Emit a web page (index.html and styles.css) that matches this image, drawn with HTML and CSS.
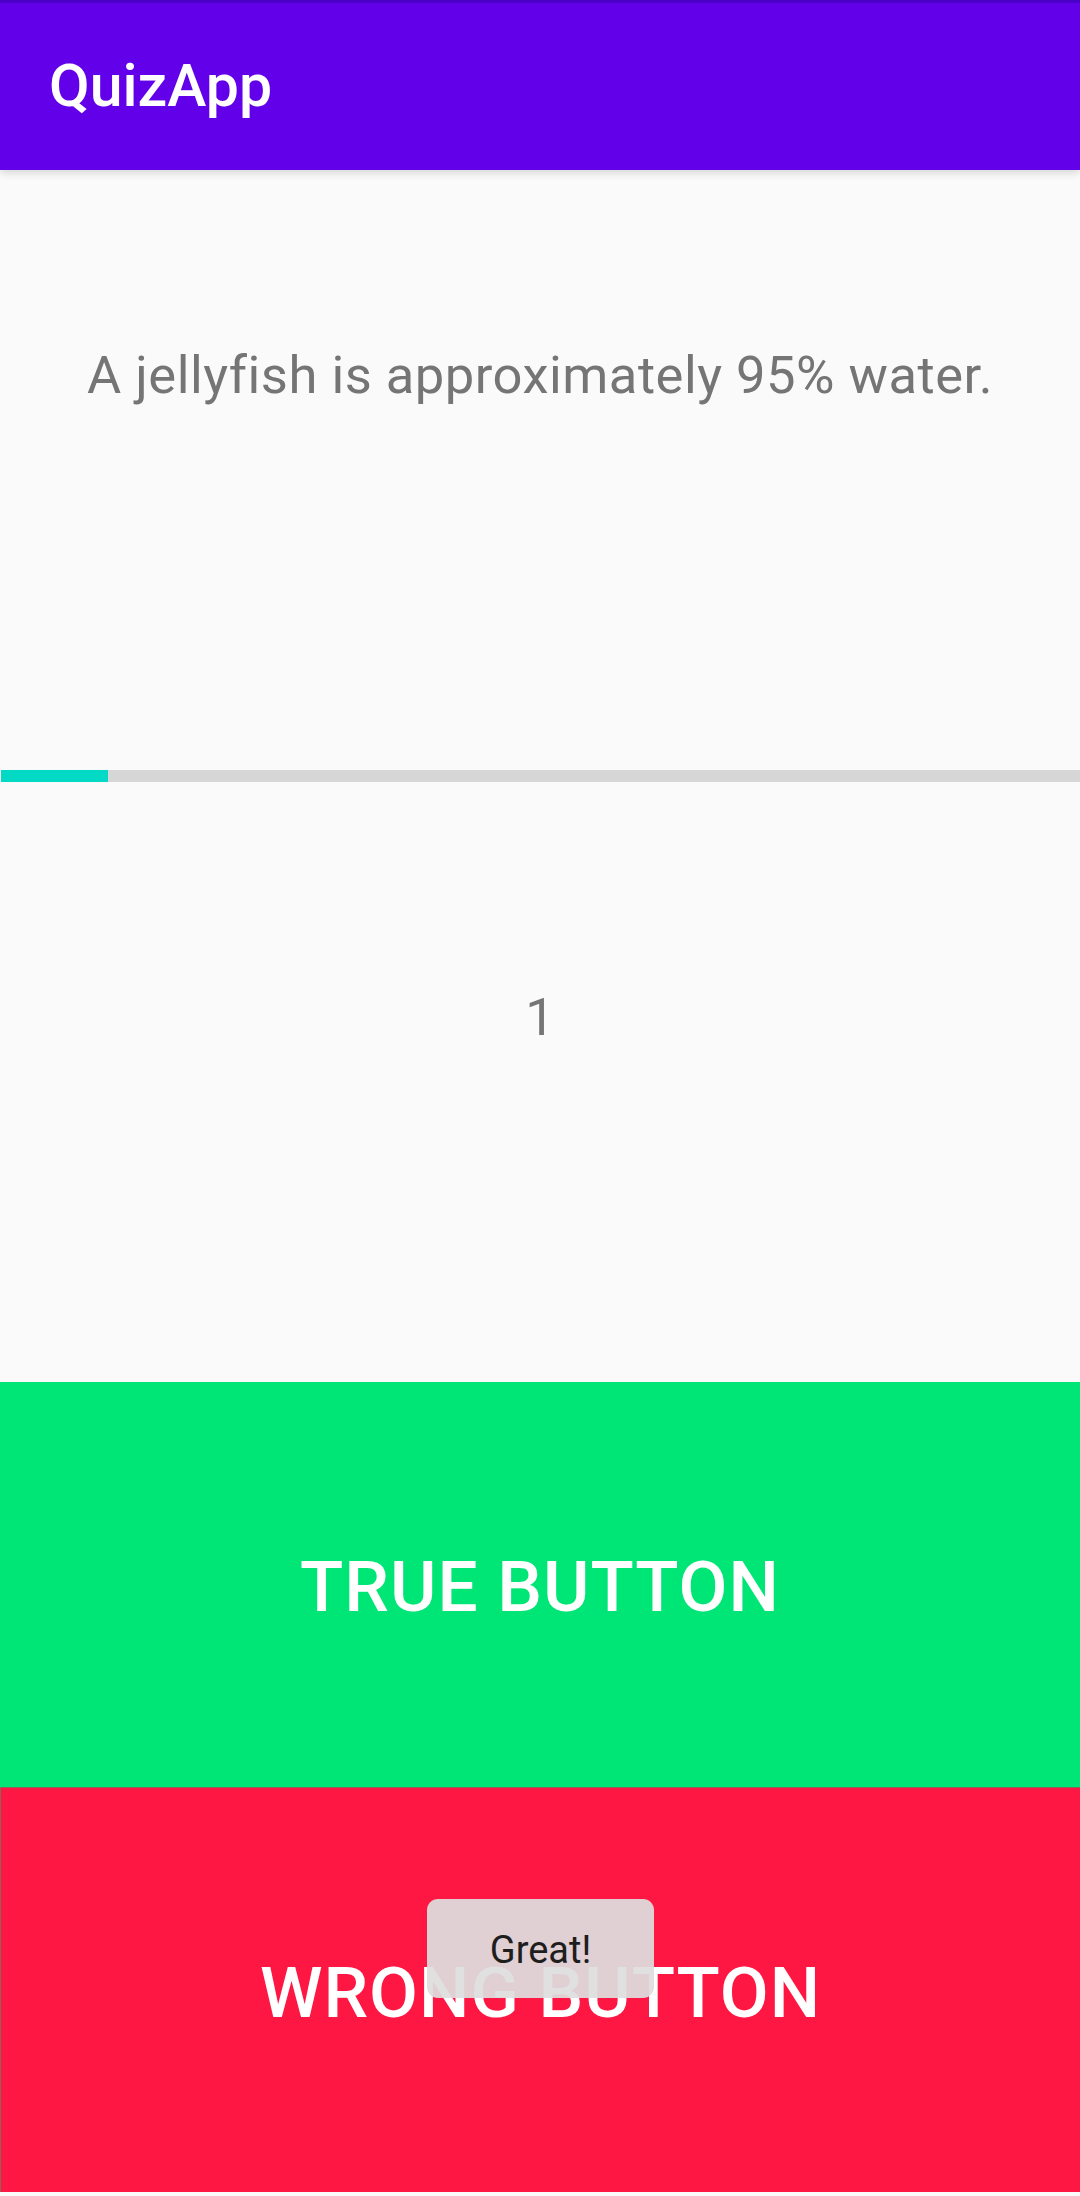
FILE: index.html
```html
<!DOCTYPE html>
<html lang="en">
<head>
<meta charset="utf-8">
<title>QuizApp</title>
<link rel="stylesheet" href="styles.css">
</head>
<body>
<div class="screen">
  <header class="appbar">
    <h1 class="title">QuizApp</h1>
  </header>
  <section class="question">
    <p class="question-text">A jellyfish is approximately 95% water.</p>
  </section>
  <div class="progress"><div class="progress-fill" style="width:107px"></div></div>
  <section class="counter">
    <p class="counter-text">1</p>
  </section>
  <button class="answer true-btn">TRUE BUTTON</button>
  <button class="answer wrong-btn">WRONG BUTTON</button>
  <div class="toast">Great!</div>
</div>
</body>
</html>
```
FILE: styles.css
```css
* { box-sizing: border-box; }
html, body {
  margin: 0;
  padding: 0;
  background: #ffffff;
}
body {
  font-family: Roboto, "Noto Sans", "Liberation Sans", sans-serif;
  font-variant-ligatures: none;
}
.screen {
  position: relative;
  width: 1080px;
  height: 2196px;
  display: flex;
  flex-direction: column;
  background: #fafafa;
  overflow: hidden;
}
.appbar {
  height: 170px;
  flex: none;
  background: #6200ea;
  border-top: 3px solid #4a00c8;
  display: flex;
  align-items: center;
  padding-left: 49px;
  box-shadow: 0 3px 8px rgba(0, 0, 0, 0.14);
  position: relative;
  z-index: 2;
}
.title {
  margin: 0;
  color: #ffffff;
  font-size: 59px;
  font-weight: 500;
  line-height: 1;
  padding-bottom: 2px;
}
.question {
  height: 600px;
  flex: none;
  padding-top: 174px;
  text-align: center;
}
.question-text, .counter-text {
  margin: 0;
  font-size: 52.5px;
  line-height: 63px;
  color: #757575;
  font-weight: 400;
}
.question-text {
  letter-spacing: 0.5px;
}
.progress {
  height: 12px;
  flex: none;
  margin-left: 1px;
  background: #d6d6d6;
}
.progress-fill {
  height: 100%;
  background: #03dac5;
}
.counter {
  height: 600px;
  flex: none;
  padding-top: 204px;
  text-align: center;
}
.answer {
  flex: none;
  height: 405px;
  width: 100%;
  border: none;
  margin: 0;
  padding: 0;
  font-family: Roboto, "Noto Sans", "Liberation Sans", sans-serif;
  font-size: 71px;
  font-weight: 500;
  letter-spacing: 1px;
  color: #ffffff;
  display: flex;
  align-items: center;
  justify-content: center;
  padding-top: 4px;
}
.true-btn {
  background: #00e676;
}
.wrong-btn {
  background: #ff1744;
  border-top: 1px solid #8a6458;
  border-left: 1px solid #8a6458;
}
.toast {
  position: absolute;
  left: 427px;
  top: 1899px;
  width: 227px;
  height: 99px;
  border-radius: 11px;
  background: rgba(222, 222, 222, 0.93);
  color: #1e1e1e;
  font-size: 38px;
  display: flex;
  align-items: center;
  justify-content: center;
  padding-top: 2px;
}
```
